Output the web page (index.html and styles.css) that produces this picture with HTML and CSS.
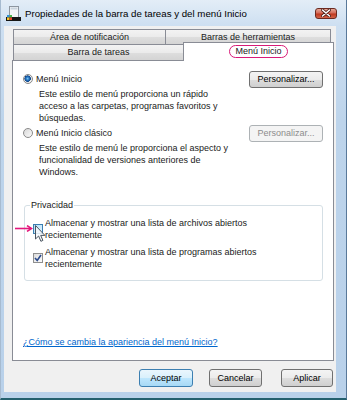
FILE: index.html
```html
<!DOCTYPE html>
<html lang="es">
<head>
    <meta charset="UTF-8">
    <title>Propiedades de la barra de tareas y del menú Inicio</title>
    <link rel="stylesheet" href="styles.css">
</head>
<body>
    <div class="window">
        <!-- title bar -->
        <div class="titlebar">
            <svg class="app-icon" width="15" height="15" viewBox="0 0 15 15">
                <rect x="3.5" y="0.5" width="9" height="11" fill="#f3f5f7" stroke="#8d96a0"/>
                <rect x="4.5" y="1.5" width="7" height="2" fill="#c9d3dd"/>
                <rect x="0" y="11" width="15" height="4" fill="#151515"/>
                <rect x="1" y="9" width="2.5" height="2.5" fill="#2f8fe0"/>
                <rect x="3.5" y="9" width="2.5" height="2.5" fill="#47b447"/>
                <rect x="1" y="11.5" width="2.5" height="2.5" fill="#f3c521"/>
                <rect x="3.5" y="11.5" width="2.5" height="2.5" fill="#e2452c"/>
            </svg>
            <span class="title">Propiedades de la barra de tareas y del menú Inicio</span>
            <span class="close-btn">
                <svg width="10" height="8" viewBox="0 0 10 8">
                    <path d="M1.5 1 L8.5 7 M8.5 1 L1.5 7" stroke="#4a1a12" stroke-width="3" stroke-linecap="round"/>
                    <path d="M1.5 1 L8.5 7 M8.5 1 L1.5 7" stroke="#fff" stroke-width="1.6" stroke-linecap="round"/>
                </svg>
            </span>
        </div>

        <div class="client">
            <!-- tabs -->
            <div class="tabs">
                <div class="tab-row">
                    <div class="tab tab-notify">Área de notificación</div>
                    <div class="tab tab-toolbars">Barras de herramientas</div>
                </div>
                <div class="tab-row front">
                    <div class="tab tab-taskbar">Barra de tareas</div>
                    <div class="tab tab-start"><span class="marked">Menú Inicio</span></div>
                </div>
            </div>

            <div class="panel">
                <div class="option">
                    <div class="option-head">
                        <span class="radio checked"></span>
                        <span class="option-label">Menú Inicio</span>
                        <span class="btn btn-custom">Personalizar...</span>
                    </div>
                    <p class="desc">Este estilo de menú proporciona un rápido<br>acceso a las carpetas, programas favoritos y<br>búsquedas.</p>
                </div>

                <div class="option">
                    <div class="option-head">
                        <span class="radio"></span>
                        <span class="option-label">Menú Inicio clásico</span>
                        <span class="btn btn-custom disabled">Personalizar...</span>
                    </div>
                    <p class="desc">Este estilo de menú le proporciona el aspecto y<br>funcionalidad de versiones anteriores de<br>Windows.</p>
                </div>

                <fieldset class="privacy">
                    <legend>Privacidad</legend>
                    <div class="check-row">
                        <span class="checkbox hover">
                            <svg class="pointer-arrow" width="18" height="7" viewBox="0 0 18 7">
                                <path d="M0 3.5 H16" stroke="#e3177c" stroke-width="1.6"/>
                                <path d="M12 0.6 L16.5 3.5 L12 6.4" fill="none" stroke="#e3177c" stroke-width="1.6"/>
                            </svg>
                            <svg class="cursor" width="11" height="17" viewBox="0 0 11 17">
                                <path d="M0.5 0.5 V14 L3.6 11 L5.9 16.3 L7.9 15.4 L5.7 10.4 H9.9 Z" fill="#f4f8fb" fill-opacity="0.85" stroke="#4c5660"/>
                            </svg>
                        </span>
                        <span class="check-label">Almacenar y mostrar una lista de archivos abiertos<br>recientemente</span>
                    </div>
                    <div class="check-row">
                        <span class="checkbox">
                            <svg width="8" height="8" viewBox="0 0 8 8">
                                <path d="M1 4 L3.2 6.5 L7 1" fill="none" stroke="#2b4a8c" stroke-width="1.6"/>
                            </svg>
                        </span>
                        <span class="check-label">Almacenar y mostrar una lista de programas abiertos<br>recientemente</span>
                    </div>
                </fieldset>

                <a class="help-link" href="#">¿Cómo se cambia la apariencia del menú Inicio?</a>
            </div>

            <div class="buttons">
                <span class="btn btn-ok">Aceptar</span>
                <span class="btn btn-cancel">Cancelar</span>
                <span class="btn btn-apply">Aplicar</span>
            </div>
        </div>
    </div>
</body>
</html>
```

FILE: styles.css
```css
body {
    margin: 0;
    font-family: 'Liberation Sans', Arial, sans-serif;
    font-size: 9px;
    color: #1a1a1a;
    background-color: #bcd3ea;
}

.window {
    width: 347px;
    height: 400px;
    box-sizing: border-box;
    display: flex;
    flex-direction: column;
    background: linear-gradient(to bottom, #e3edf7 0, #cddff1 26px, #bdd4eb 120px, #b9d1ea 100%);
    border-left: 1px solid #a7bbd0;
    border-right: 1px solid #59799a;
    border-bottom: 2px solid #24606e;
    overflow: hidden;
}

/* title bar */
.titlebar {
    height: 26px;
    display: flex;
    align-items: center;
    padding-left: 5px;
}

.app-icon {
    margin-right: 4px;
    flex-shrink: 0;
}

.title {
    font-size: 9.7px;
    color: #000;
    white-space: nowrap;
}

.close-btn {
    margin-left: auto;
    margin-right: 9px;
    width: 22px;
    height: 11px;
    box-sizing: border-box;
    border: 1px solid #6b2a20;
    border-radius: 3px;
    background: linear-gradient(to bottom, #e9a897 0, #d26a58 45%, #c0391f 55%, #d2644a 100%);
    display: flex;
    align-items: center;
    justify-content: center;
}

/* client area */
.client {
    flex: 1;
    margin: 0 10px 6px 3px;
    padding: 3px 2px 0 8px;
    background-color: #f0f0f0;
    display: flex;
    flex-direction: column;
}

.tabs {
    margin-left: 1px;
}

.tab-row {
    display: flex;
    align-items: flex-end;
    height: 16px;
}

.tab-row.front {
    margin-top: -1px;
}

.tab {
    box-sizing: border-box;
    height: 16px;
    line-height: 14px;
    text-align: center;
    border: 1px solid #898c95;
    background: linear-gradient(to bottom, #f3f3f3 0, #ebebeb 50%, #dedede 51%, #d4d4d4 100%);
    white-space: nowrap;
}

.tab-notify {
    width: 153px;
}

.tab-toolbars {
    width: 166px;
    margin-left: -1px;
}

.tab-taskbar {
    width: 171px;
    border-bottom: none;
}

.tab-start {
    width: 151px;
    height: 19px;
    line-height: 17px;
    margin-left: -1px;
    margin-bottom: -1px;
    border-bottom: none;
    background: #fff;
    position: relative;
    z-index: 1;
}

.marked {
    position: relative;
}

.marked::after {
    content: "";
    position: absolute;
    left: -6px;
    right: -6px;
    top: -1px;
    bottom: -2px;
    border: 1.5px solid #d81b78;
    border-radius: 8px;
}

/* tab page */
.panel {
    width: 322px;
    height: 301px;
    box-sizing: border-box;
    border: 1px solid #898c95;
    background-color: #fff;
    padding: 9px 10px 12px 10px;
    display: flex;
    flex-direction: column;
}

.option-head {
    display: flex;
    align-items: center;
    height: 18px;
}

.option-label {
    margin-left: 3px;
}

.radio {
    width: 10px;
    height: 10px;
    box-sizing: border-box;
    border-radius: 50%;
    border: 1px solid #8a8a8a;
    background: linear-gradient(to bottom right, #d8d8d8, #fbfbfb);
}

.radio.checked {
    background: radial-gradient(circle at 45% 45%, #7fcaf3 0, #2675c4 1.6px, #0f4688 3px, #eaeaea 3.4px, #fafafa 100%);
}

.desc {
    margin: 0 0 0 16px;
    line-height: 12px;
}

.btn {
    box-sizing: border-box;
    height: 17px;
    display: flex;
    align-items: center;
    justify-content: center;
    border: 1px solid #707070;
    border-radius: 3px;
    background: linear-gradient(to bottom, #f4f4f4 0, #ebebeb 50%, #dddddd 51%, #cfcfcf 100%);
    color: #000;
}

.btn-custom {
    margin-left: auto;
    width: 74px;
}

.btn.disabled {
    border-color: #adb2b5;
    background: #f4f4f4;
    color: #8d8d8d;
}

/* privacy group */
.privacy {
    margin: 21px 0 0 1px;
    padding: 6px 0 10px 5px;
    border: 1px solid #d5dfe5;
    border-radius: 3px;
    min-inline-size: 0;
}

.privacy legend {
    padding: 0 1px;
    line-height: 12px;
}

.check-row {
    display: flex;
    align-items: center;
    line-height: 12px;
}

.check-row + .check-row {
    margin-top: 5px;
}

.checkbox {
    position: relative;
    width: 10px;
    height: 10px;
    box-sizing: border-box;
    margin: 0 2px 0 3px;
    border: 1px solid #8f8f8f;
    background: linear-gradient(to bottom right, #dcdcdc, #fdfdfd);
    display: flex;
    align-items: center;
    justify-content: center;
    flex-shrink: 0;
}

.checkbox.hover {
    border-color: #3c7fb1;
    background: linear-gradient(to bottom right, #b1dffa, #e4f4fd);
}

.pointer-arrow {
    position: absolute;
    left: -19px;
    top: 0;
}

.cursor {
    position: absolute;
    left: 1px;
    top: 0;
}

.help-link {
    margin-top: auto;
    line-height: 12px;
    color: #0066cc;
    text-decoration: underline;
}

/* dialog buttons */
.buttons {
    display: flex;
    justify-content: flex-end;
    margin-top: 8px;
    padding-right: 1px;
}

.buttons .btn {
    height: 18px;
}

.btn-ok {
    width: 54px;
    border-color: #3c7fb1;
    background: linear-gradient(to bottom, #eaf6fd 0, #d9f0fc 50%, #bee6fd 51%, #a7d9f5 100%);
}

.btn-cancel {
    width: 53px;
    margin-left: 16px;
}

.btn-apply {
    width: 52px;
    margin-left: 19px;
}
```
